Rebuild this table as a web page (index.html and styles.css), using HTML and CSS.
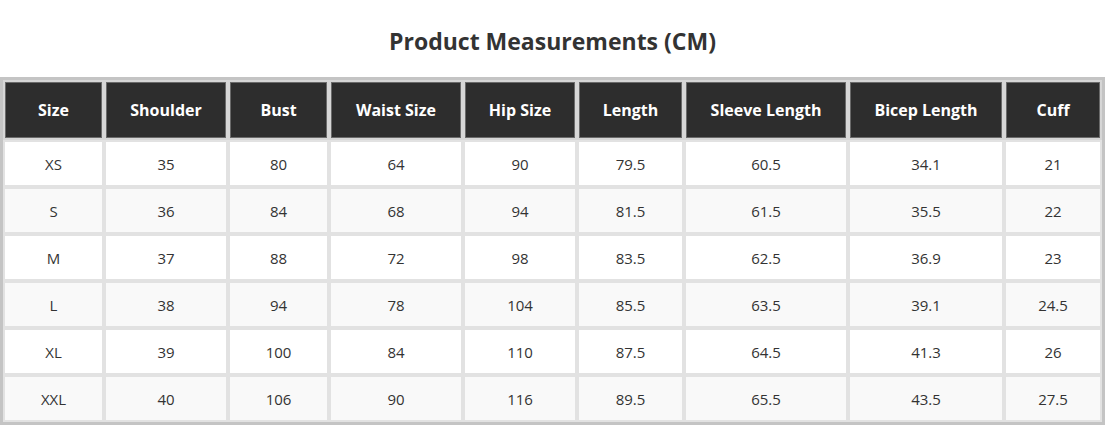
FILE: index.html
```html
<!DOCTYPE html>
<html lang="en">
<head>
<meta charset="utf-8">
<title>Product Measurements</title>
<link rel="stylesheet" href="styles.css">
</head>
<body>
<h2 class="title">Product Measurements (CM)</h2>
<table class="size-table">
  <colgroup>
    <col class="c-size"><col class="c-shoulder"><col class="c-bust"><col class="c-waist"><col class="c-hip"><col class="c-length"><col class="c-sleeve"><col class="c-bicep"><col class="c-cuff">
  </colgroup>
  <thead>
    <tr><th>Size</th><th>Shoulder</th><th>Bust</th><th>Waist Size</th><th>Hip Size</th><th>Length</th><th>Sleeve Length</th><th>Bicep Length</th><th>Cuff</th></tr>
  </thead>
  <tbody>
    <tr><td>XS</td><td>35</td><td>80</td><td>64</td><td>90</td><td>79.5</td><td>60.5</td><td>34.1</td><td>21</td></tr>
    <tr><td>S</td><td>36</td><td>84</td><td>68</td><td>94</td><td>81.5</td><td>61.5</td><td>35.5</td><td>22</td></tr>
    <tr><td>M</td><td>37</td><td>88</td><td>72</td><td>98</td><td>83.5</td><td>62.5</td><td>36.9</td><td>23</td></tr>
    <tr><td>L</td><td>38</td><td>94</td><td>78</td><td>104</td><td>85.5</td><td>63.5</td><td>39.1</td><td>24.5</td></tr>
    <tr><td>XL</td><td>39</td><td>100</td><td>84</td><td>110</td><td>87.5</td><td>64.5</td><td>41.3</td><td>26</td></tr>
    <tr><td>XXL</td><td>40</td><td>106</td><td>90</td><td>116</td><td>89.5</td><td>65.5</td><td>43.5</td><td>27.5</td></tr>
  </tbody>
</table>
</body>
</html>
```
FILE: styles.css
```css
html, body {
  margin: 0;
  padding: 0;
  background: #ffffff;
  font-family: "Open Sans", "Noto Sans", "DejaVu Sans", sans-serif;
  color: #333333;
}

.title {
  margin: 0;
  height: 77px;
  box-sizing: border-box;
  padding-top: 27px;
  text-align: center;
  font-size: 23px;
  line-height: 28px;
  font-weight: 700;
  color: #333333;
}

.size-table {
  width: 1105px;
  table-layout: fixed;
  border-collapse: separate;
  border-spacing: 0;
  border: 3px solid #c4c4c4;
}

.c-size { width: 101px; }
.c-shoulder { width: 124px; }
.c-bust { width: 101px; }
.c-waist { width: 134px; }
.c-hip { width: 114px; }
.c-length { width: 107px; }
.c-sleeve { width: 164px; }
.c-bicep { width: 156px; }
.c-cuff { width: 98px; }

.size-table th {
  height: 60px;
  box-sizing: border-box;
  padding: 0;
  background: #2d2d2d;
  color: #ffffff;
  font-size: 16px;
  font-weight: 700;
  text-align: center;
  border: 2px solid #d6d6d6;
  box-shadow: inset 0 0 0 1px #6a6a6a;
}

.size-table td {
  height: 47px;
  box-sizing: border-box;
  padding: 0;
  text-align: center;
  font-size: 15px;
  color: #333333;
  border: 2px solid #e2e2e2;
  background: #ffffff;
}

.size-table tbody tr:nth-child(even) td {
  background: #f9f9f9;
}
```
